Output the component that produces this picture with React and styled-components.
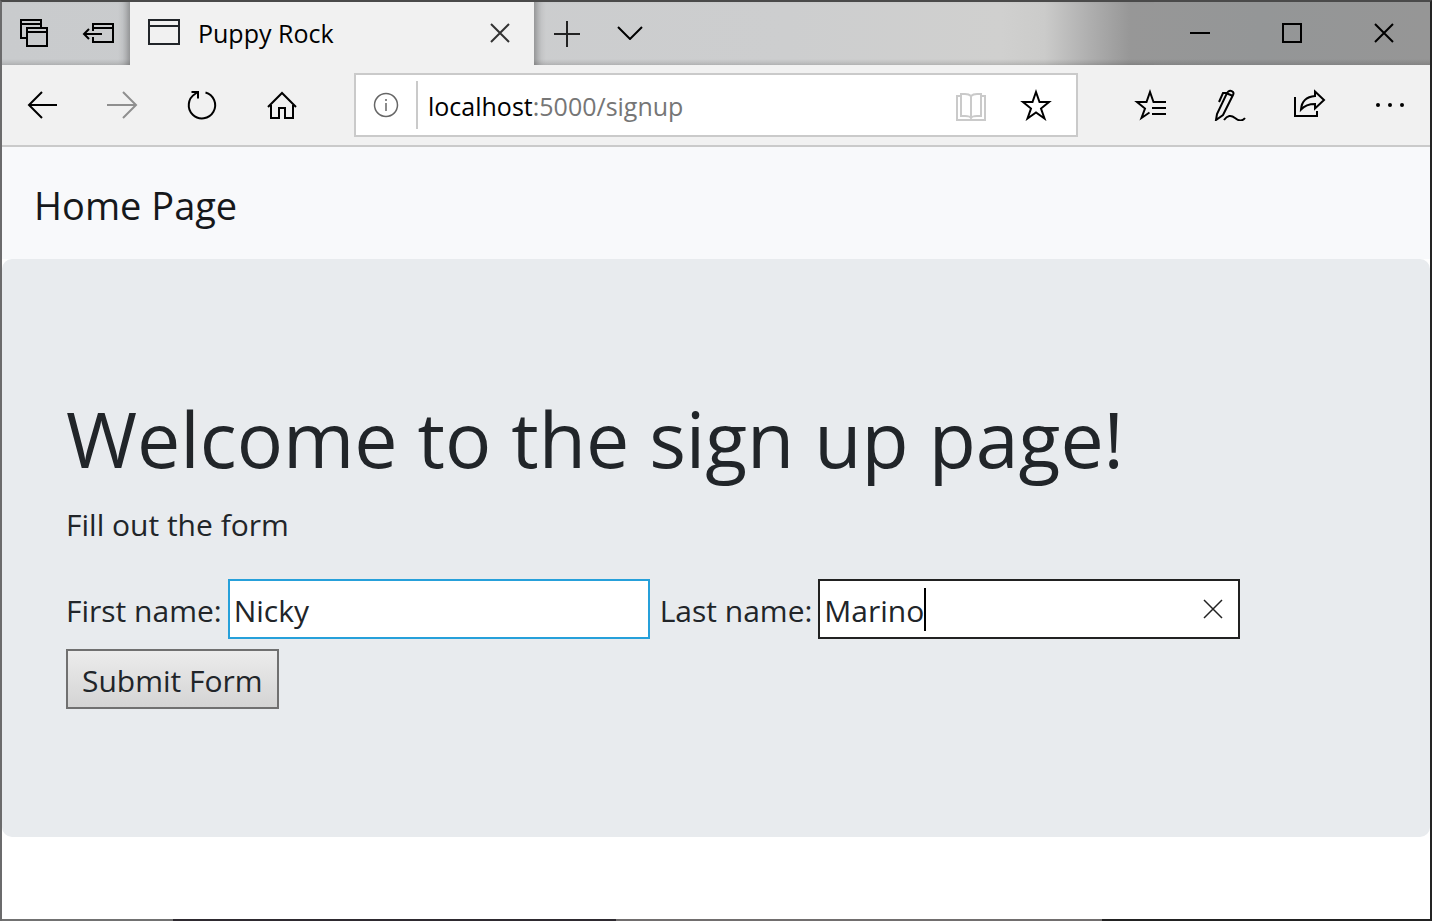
import React from "react";
import styled, { createGlobalStyle } from "styled-components";

const Global = createGlobalStyle`
  *, *::before, *::after { box-sizing: border-box; }
  html, body, #root { height: 100%; }
  body { margin: 0; font-family: "Open Sans", "Noto Sans", sans-serif; color: #212529; background: #fff; }
  button, input { font: inherit; color: inherit; margin: 0; }
`;

const Window = styled.div`
  min-height: 100%;
  display: flex;
  flex-direction: column;
  border: 2px solid;
  border-color: #4a4a4a #242424 #4e4e50 #6b6b6c;
  border-bottom: 0;
  background: #fff;
`;

const BottomEdge = styled.div`
  height: 2px;
  margin-top: auto;
  background: linear-gradient(90deg, #717171 12%, #2e2a30 12%, #2e2a30 43%, #716e6e 43%, #716e6e 77%, #222 77%);
`;

const TitleBar = styled.header`
  height: 63px;
  display: flex;
  background:
    linear-gradient(0deg, rgba(0, 0, 0, 0.12), transparent 6px),
    linear-gradient(90deg, #c9cbcd 0%, #cdcecf 55%, #d0d0cf 70%, #cbcbca 73%, #b0b0b0 76%, #979797 79%, #949697 88%, #969696 100%);
`;

const TabTools = styled.div`
  width: 128px;
  flex: none;
  display: flex;
  padding-bottom: 1px;
  box-shadow: inset -10px 0 10px -8px rgba(0, 0, 0, 0.4);
`;

const IconButton = styled.button`
  width: ${(p) => p.$w || 64}px;
  flex: none;
  padding: 0;
  border: 0;
  background: none;
  display: flex;
  align-items: center;
  justify-content: center;
  color: ${(p) => p.$color || "#000"};
  svg { display: block; }
`;

const Tab = styled.div`
  width: 404px;
  flex: none;
  display: flex;
  align-items: center;
  padding: 0 0 1px 18px;
  background: #f1f1f1;
`;

const TabTitle = styled.span`
  flex: 1;
  padding-left: 18px;
  font-size: 25px;
  line-height: 32px;
  color: #000;
`;

const TabActions = styled.div`
  flex: 1;
  display: flex;
  padding-bottom: 1px;
  box-shadow: inset 10px 0 10px -8px rgba(0, 0, 0, 0.4);
`;

const WindowControls = styled.div`
  display: flex;
  padding-bottom: 1px;
`;

const Toolbar = styled.nav`
  height: 82px;
  display: flex;
  align-items: stretch;
  background: #f1f1f1;
  border-bottom: 2px solid #cacaca;
`;

const AddressBar = styled.div`
  flex: 1;
  margin: 8px 32px;
  display: flex;
  align-items: stretch;
  background: #fff;
  border: 2px solid #cacaca;
`;

const Divider = styled.span`
  width: 2px;
  margin: 6px 10px 6px 0;
  background: #cacaca;
`;

const Address = styled.div`
  flex: 1;
  align-self: center;
  padding-top: 2px;
  font-size: 25px;
  line-height: 32px;
  color: #767676;
  outline: none;
  white-space: nowrap;
`;

const Host = styled.span`
  color: #000;
`;

const SiteNav = styled.nav`
  height: 112px;
  padding: 4px 32px 0;
  display: flex;
  align-items: center;
  background: #f8f9fb;
`;

const Brand = styled.a`
  font-size: 38px;
  line-height: 60px;
  color: #16181b;
  text-decoration: none;
`;

const Jumbotron = styled.main`
  padding: 128px 64px;
  border-radius: 10px;
  background: #e8ebee;
`;

const Heading = styled.h1`
  margin: 0 0 16px;
  padding-top: 8px;
  font-size: 77px;
  font-weight: 400;
  line-height: 88px;
`;

const Lead = styled.p`
  margin: 0 0 32px;
  padding-top: 4px;
  font-size: 30px;
  line-height: 44px;
`;

const Form = styled.form`
  font-size: 30px;
  line-height: 44px;
`;

const Fields = styled.div`
  display: flex;
  flex-wrap: wrap;
  gap: 10px;
  margin-bottom: 10px;
`;

const Field = styled.div`
  display: flex;
  align-items: center;
  gap: 6px;
`;

const Label = styled.label`
  padding-top: 4px;
`;

const InputBox = styled.div`
  position: relative;
`;

const TextInput = styled.input`
  display: block;
  width: 422px;
  height: 60px;
  padding: 6px 4px 4px;
  border: 2px solid ${(p) => p.$border};
  border-radius: 0;
  background: #fff;
  outline: none;
`;

const Caret = styled.span`
  position: absolute;
  left: 106px;
  top: 9px;
  width: 2px;
  height: 43px;
  background: #000;
`;

const ClearButton = styled(IconButton)`
  position: absolute;
  right: 2px;
  top: 2px;
  height: 56px;
`;

const SubmitButton = styled.button`
  display: block;
  height: 60px;
  padding: 4px 14px 0;
  border: 2px solid #707070;
  border-radius: 0;
  background: linear-gradient(#ececec, #d4d4d4);
`;

const Icon = ({ w = 32, h = 32, sw = 2, children }) => (
  <svg width={w} height={h} viewBox={`0 0 ${w} ${h}`} fill="none" stroke="currentColor" strokeWidth={sw} aria-hidden="true">
    {children}
  </svg>
);

const TabsAsideIcon = () => (
  <Icon>
    <path d="M8 21H3V3h20v7M3 7h20M9 11h20v18H9zM9 15h20" />
  </Icon>
);

const SetAsideIcon = () => (
  <Icon w={34}>
    <path d="M12 14V7h20v18H12v-5M12 11h20M21 17H3M8 12l-5 5 5 5" />
  </Icon>
);

const PageIcon = () => (
  <Icon w={32} h={28}>
    <path d="M1 1h30v24H1zM1 7h30" />
  </Icon>
);

const CrossIcon = ({ sw }) => (
  <Icon w={20} h={20} sw={sw}>
    <path d="M1 1l18 18M19 1L1 19" />
  </Icon>
);

const PlusIcon = () => (
  <Icon w={26} h={28}>
    <path d="M13 2v26M0 15h26" />
  </Icon>
);

const ChevronIcon = () => (
  <Icon w={26} h={14}>
    <path d="M1 1l12 12L25 1" />
  </Icon>
);

const BackIcon = () => (
  <Icon>
    <path d="M31 16H3M16 3L3 16l13 13" />
  </Icon>
);

const ForwardIcon = () => (
  <Icon>
    <path d="M1 16h29M17 3l13 13-13 13" />
  </Icon>
);

const RefreshIcon = () => (
  <Icon>
    <path d="M19.500 3.500A13.200 13.200 0 1 1 9 5L11.500 3M5.500 3H12v6.500" />
  </Icon>
);

const HomeIcon = () => (
  <Icon>
    <path d="M2 18L16 4l14 14M5 16v13h8V19h6v10h8V16" />
  </Icon>
);

const InfoIcon = () => (
  <Icon w={26} h={26} sw={1.5}>
    <circle cx="13" cy="13" r="11.500" />
    <path d="M13 11v8M13 7v2" />
  </Icon>
);

const BookIcon = () => (
  <Icon w={30} h={32}>
    <path d="M5 7H1v24h28V7h-4M15 7Q13 5 9 5H5v22h4q5 0 6 2q1-2 6-2h4V5h-4q-4 0-6 2v21" />
  </Icon>
);

const StarIcon = () => (
  <Icon>
    <path d="M16 3l3.500 10H29l-8 6.500 3.500 10L16 23.500l-8.500 6 3.500-10L3 13h9.500z" />
  </Icon>
);

const FavoritesIcon = () => (
  <Icon>
    <path d="M32 13H19.500L16 3l-3.500 10H3l8 6.500-3.500 9.500 8-5.500M18 19h14M18 25h14" />
  </Icon>
);

const NotesIcon = () => (
  <Icon>
    <path d="M2 31l1-6L13 4q3-4 6-1 1 1 0 3L9 26zM12 4l7 3M13 4H9L5 13M10 31q5-7 11-2t10 0" />
  </Icon>
);

const ShareIcon = () => (
  <Icon>
    <path d="M1 8v19h22v-5M21 2.500L30 11l-9 8.500V15Q12 15 7 20.500Q8 8 21 7z" />
  </Icon>
);

const MoreIcon = () => (
  <Icon w={30} h={6}>
    <g fill="currentColor" stroke="none">
      <circle cx="3" cy="3" r="2" />
      <circle cx="15" cy="3" r="2" />
      <circle cx="27" cy="3" r="2" />
    </g>
  </Icon>
);

const MinimizeIcon = () => (
  <Icon w={20} h={20}>
    <path d="M0 10h20" />
  </Icon>
);

const MaximizeIcon = () => (
  <Icon w={20} h={20}>
    <path d="M1 1h18v18H1z" />
  </Icon>
);

export default function App() {
  return (
    <>
      <Global />
      <Window>
        <TitleBar>
          <TabTools>
            <IconButton aria-label="Tabs you've set aside"><TabsAsideIcon /></IconButton>
            <IconButton aria-label="Set these tabs aside"><SetAsideIcon /></IconButton>
          </TabTools>
          <Tab>
            <PageIcon />
            <TabTitle>Puppy Rock</TabTitle>
            <IconButton $w={68} $color="#333" aria-label="Close tab"><CrossIcon /></IconButton>
          </Tab>
          <TabActions>
            <IconButton $w={66} $color="#222" aria-label="New tab"><PlusIcon /></IconButton>
            <IconButton $w={60} aria-label="Tab previews"><ChevronIcon /></IconButton>
          </TabActions>
          <WindowControls>
            <IconButton $w={92} aria-label="Minimize"><MinimizeIcon /></IconButton>
            <IconButton $w={92} aria-label="Maximize"><MaximizeIcon /></IconButton>
            <IconButton $w={92} aria-label="Close"><CrossIcon /></IconButton>
          </WindowControls>
        </TitleBar>
        <Toolbar aria-label="Browser">
          <IconButton $w={80} aria-label="Back"><BackIcon /></IconButton>
          <IconButton $w={80} $color="#8f8f8f" aria-label="Forward"><ForwardIcon /></IconButton>
          <IconButton $w={80} aria-label="Refresh"><RefreshIcon /></IconButton>
          <IconButton $w={80} aria-label="Home"><HomeIcon /></IconButton>
          <AddressBar>
            <IconButton $w={60} $color="#666" aria-label="Site information"><InfoIcon /></IconButton>
            <Divider />
            <Address role="textbox" aria-label="Address" contentEditable suppressContentEditableWarning spellCheck={false}>
              <Host>localhost</Host>:5000/signup
            </Address>
            <IconButton $w={50} $color="#cacaca" aria-label="Reading view"><BookIcon /></IconButton>
            <IconButton $w={80} aria-label="Add to favorites"><StarIcon /></IconButton>
          </AddressBar>
          <IconButton $w={80} aria-label="Favorites"><FavoritesIcon /></IconButton>
          <IconButton $w={80} aria-label="Add notes"><NotesIcon /></IconButton>
          <IconButton $w={80} aria-label="Share"><ShareIcon /></IconButton>
          <IconButton $w={80} aria-label="More"><MoreIcon /></IconButton>
        </Toolbar>
        <SiteNav aria-label="Site">
          <Brand href="#home">Home Page</Brand>
        </SiteNav>
        <Jumbotron>
          <Heading>Welcome to the sign up page!</Heading>
          <Lead>Fill out the form</Lead>
          <Form onSubmit={(e) => e.preventDefault()}>
            <Fields>
              <Field>
                <Label htmlFor="first">First name:</Label>
                <TextInput id="first" $border="#26a0da" defaultValue="Nicky" />
              </Field>
              <Field>
                <Label htmlFor="last">Last name:</Label>
                <InputBox>
                  <TextInput id="last" $border="#212121" defaultValue="Marino" />
                  <Caret />
                  <ClearButton $w={50} $color="#222" type="button" aria-label="Clear last name"><CrossIcon sw={1.5} /></ClearButton>
                </InputBox>
              </Field>
            </Fields>
            <SubmitButton type="submit">Submit Form</SubmitButton>
          </Form>
        </Jumbotron>
        <BottomEdge />
      </Window>
    </>
  );
}
